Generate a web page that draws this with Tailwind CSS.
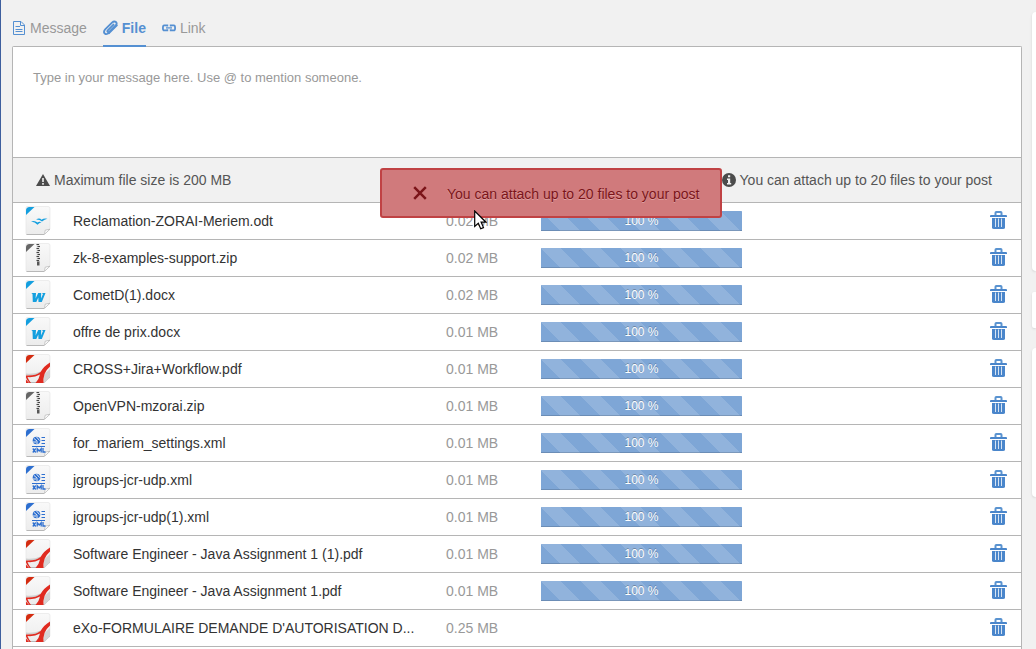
<!DOCTYPE html>
<html lang="en">
<head>
<meta charset="utf-8">
<title>Activity composer</title>
<script src="https://cdn.jsdelivr.net/npm/@tailwindcss/browser@4"></script>
</head>
<body class="h-screen overflow-hidden bg-[#f1f1f1] font-['Liberation_Sans',Arial,sans-serif] text-sm text-[#333]">
<svg class="absolute h-0 w-0" aria-hidden="true">
  <defs>
    <linearGradient id="paper" x1="0" y1="0" x2="0" y2="1"><stop offset="0" stop-color="#f9f9f9"/><stop offset="1" stop-color="#ececec"/></linearGradient>
    <symbol id="page" viewBox="0 0 26 30">
      <path d="M2 .5H23Q25 .5 25 2.500V23L19.500 28.500H2Q1 28.500 1 27V2Q1 .5 2 .5Z" fill="url(#paper)" stroke="#e2e2e2" stroke-width=".6"/>
      <path d="M1.500 28.500H19" stroke="#b8b8b8"/>
      <path d="M19.500 28.300 20.200 24.200 25 23.200Z" fill="#fff" stroke="#b5b5b5" stroke-width=".7"/>
      <path d="M1 9V4.500Q1 1 4.500 1H9.500Z" fill="currentColor"/>
    </symbol>
    <symbol id="odt" viewBox="0 0 26 30">
      <g color="#149fdf"><use href="#page"/></g>
      <path d="M11 13.500Q14.500 11.500 16.500 13.700Q19 11.800 22.500 12.700Q19.500 13.200 17 15.500Q14.500 13.300 11 13.500ZM6 15.500Q10 14.200 12.500 16.600Q14 15.300 16.500 16.200Q14 16.700 12.500 18.700Q10 15.900 6 15.500Z" fill="#149fdf"/>
    </symbol>
    <symbol id="zip" viewBox="0 0 26 30">
      <g color="#666"><use href="#page"/></g>
      <path d="M11.500 .5H15V19H11.500Z" fill="#ddd"/>
      <path d="M11.500 1.500H14M12.500 3.500H15M11.500 5.500H14M12.500 7.500H15M11.500 9.500H14M12.500 11.500H15M11.500 13.500H14M12.500 15.500H15M11.500 17.500H14" stroke="#444" stroke-width="1.200"/>
      <path d="M12 18.500H14.500V22.500H12Z" fill="#555"/>
    </symbol>
    <symbol id="docx" viewBox="0 0 26 30">
      <g color="#149fdf"><use href="#page"/></g>
      <path d="M6.300 13H11L10.600 18.600 13.200 13H16.200L16 18.600 18 14 16.800 13H20.500L16.800 22H13.500L13.300 17.600 11.300 22H7.800L7.500 14Z" fill="#149fdf"/>
    </symbol>
    <symbol id="pdf" viewBox="0 0 26 30">
      <g color="#d42c10"><use href="#page"/></g>
      <path d="M1 19.500Q9 20.500 15.500 17.500L14.500 20Q9 22 1 21.500Z" fill="#cfcfcf"/>
      <path d="M25 15 18.500 21V28.500H20L25 23Z" fill="#d5d5d5"/>
      <path d="M1 21.500Q11 22 15.500 18Q19 12 25 8.500V12.500Q21 16 19.500 20Q18 24.500 18.500 29H10.500Q14 25.500 15 20.500Q9.500 23.700 2.500 23Q3.500 26 6 29H4.500Q2 26.500 1 23.500Z" fill="#e02b20"/>
      <path d="M1 25.500V29H4Z" fill="#e02b20"/>
    </symbol>
    <symbol id="xml" viewBox="0 0 26 30">
      <g color="#2d6fd0"><use href="#page"/></g>
      <circle cx="11.500" cy="12.500" r="3.800" fill="#2d6fd0"/>
      <path d="M9 10.500 12 13V16M11.500 9 14.500 12.500M8 14H11" stroke="#f5f5f5" stroke-width=".9" fill="none"/>
      <path d="M16.500 9.500H20M16.500 12.500H20M16.500 15.500H20M7 18.500H20" stroke="#2d6fd0" stroke-width="1"/>
      <path d="M7.800 20.500 10.700 24.500M10.700 20.500 7.800 24.500M12.200 24.500V20.700L14.200 23 16.200 20.700V24.500M18 20V24H20.500" stroke="#2d6fd0" stroke-width="1.300" fill="none"/>
    </symbol>
    <symbol id="trash" viewBox="0 0 18 20">
      <path d="M5.500 4V1.800Q5.500 1 6.300 1H10.700Q11.500 1 11.500 1.800V4" fill="none" stroke="#5a93d0" stroke-width="2"/>
      <path d="M1 4H16Q17 4 17 5V6H0V5Q0 4 1 4Z" fill="#4a86cb"/>
      <path d="M2 7H15V16.500Q15 18 13 18H4Q2 18 2 16.500Z" fill="#4a86cb"/>
      <path d="M5.500 7.500V16M8.500 7.500V16M11.500 7.500V16" stroke="#d5e3f3" stroke-width="1"/>
    </symbol>
  </defs>
</svg>

<div class="flex h-full border-l border-[#3e5f9e]">
  <main class="ml-[11px] flex flex-1 flex-col pt-4">
    <nav class="flex gap-4 text-[#999]" aria-label="Post type">
      <a href="#message" class="flex h-[30px] items-start gap-1 leading-6">
        <svg class="mt-1 h-4 w-[14px]" viewBox="0 0 14 16" fill="none" stroke="#5590d2"><path d="M1.500 1.500H9L12.500 5V14.500H1.500Z"/><path d="M8.500 1.500V5.500H12.500"/><path d="M3.500 6.500H8M3.500 9.500H10.500M3.500 11.500H10.500"/></svg>Message</a>
      <a href="#file" class="z-10 -mb-px flex h-[31px] items-start gap-1 border-b-2 border-[#5590d2] font-bold leading-6 text-[#5590d2]" aria-current="page">
        <svg class="mt-1 h-4 w-[15px]" viewBox="0 0 15 16" fill="none" stroke="#5590d2" stroke-width="1.900" stroke-linecap="round"><path d="M10.500 4.600 4.800 10.300Q4 11.300 4.800 12Q5.600 12.600 6.500 11.700L12.700 5.500Q14.600 3.400 12.800 1.900Q11 .7 9 2.600L2.400 9.200Q0 11.800 1.800 13.500Q3.600 15 6 12.900"/><path d="M6 13.200 13.800 5.400"/></svg>File</a>
      <a href="#link" class="flex h-[30px] items-start gap-1 leading-6">
        <svg class="mt-1 h-4 w-[14px]" viewBox="0 0 14 16" fill="none" stroke="#5590d2" stroke-width="1.800"><path d="M5.300 6.600V5.400H2.200Q.9 5.400.9 7.900T2.200 10.400H5.300V9.200M8.700 6.600V5.400H11.800Q13.100 5.400 13.100 7.900T11.800 10.400H8.700V9.200"/><path d="M4 7.900H10" stroke-width="1.300"/></svg>Link</a>
    </nav>

    <section class="relative flex-1 rounded-t-[2px] border border-b-0 border-[#b5b5b5] bg-white">
      <textarea aria-label="Message" class="block h-[110px] w-full resize-none bg-white px-5 pt-[21px] text-[13px] leading-5 outline-none placeholder:text-[#999]" placeholder="Type in your message here. Use @ to mention someone."></textarea>

      <div class="flex h-[45px] items-center justify-between border-t border-[#b5b5b5] bg-[#f1f1f1] pr-[29px] pl-[23px] text-[#555]">
        <p class="flex items-center gap-1"><svg class="h-[14px] w-[14px]" viewBox="0 0 14 14"><path d="M7 1 14 13H0Z" fill="#4c4c4c"/><path d="M7 5V9M7 10V11.800" stroke="#f1f1f1" stroke-width="1.600"/></svg>Maximum file size is 200 MB</p>
        <p class="flex items-center gap-1"><svg class="h-[14px] w-[14px]" viewBox="0 0 14 14"><circle cx="7" cy="7" r="7" fill="#4c4c4c"/><path d="M6 2.300H8.200V4.200H6ZM5 5.500H8.200V10H9.200V11.500H5V10H6V7H5Z" fill="#f1f1f1"/></svg>You can attach up to 20 files to your post</p>
      </div>

      <table class="w-full table-fixed border-collapse border-b border-[#b5b5b5]" aria-label="Attached files">
        <colgroup><col class="w-[60px]"><col class="w-[373px]"><col class="w-[95px]"><col class="w-[201px]"><col></colgroup>
        <tbody id="files"></tbody>
      </table>

      <div role="alert" class="absolute top-[121px] left-[367px] flex h-[50px] w-[342px] items-center gap-5 rounded-[3px] border-2 border-[#c04244] bg-[#d07a7c] pl-[31px] text-[#7b1419] [text-shadow:0_1px_0_rgba(255,255,255,0.3)]">
        <svg class="h-[14px] w-[14px] shrink-0" viewBox="0 0 14 14" stroke="#7b1419" stroke-width="2.500"><path d="M1.200 1.200 12.800 12.800M12.800 1.200 1.200 12.800"/></svg>
        <span class="pt-px whitespace-nowrap">You can attach up to 20 files to your post</span>
      </div>
      <svg class="absolute top-[163px] left-[461px] h-[20px] w-[13px]" viewBox="0 0 13 20" aria-hidden="true"><path d="M.7 1V16.500L4.300 13.300 6.700 18.800 9.500 17.600 7.100 12.200H12Z" fill="#fff" stroke="#000" stroke-width="1.200"/></svg>
    </section>
  </main>

  <aside class="ml-[10px] flex w-1 flex-col pt-3" aria-hidden="true">
    <div class="h-[259px] rounded-l-[4px] bg-white shadow-sm"></div>
    <div class="mt-[21px] h-9 rounded-l-[2px] bg-white shadow-sm"></div>
    <div class="mt-5 h-[149px] rounded-l-[4px] bg-white shadow-sm"></div>
  </aside>
</div>

<script>
const files = [
  ['odt', 'Reclamation-ZORAI-Meriem.odt', '0.02', 100],
  ['zip', 'zk-8-examples-support.zip', '0.02', 100],
  ['docx', 'CometD(1).docx', '0.02', 100],
  ['docx', 'offre de prix.docx', '0.01', 100],
  ['pdf', 'CROSS+Jira+Workflow.pdf', '0.01', 100],
  ['zip', 'OpenVPN-mzorai.zip', '0.01', 100],
  ['xml', 'for_mariem_settings.xml', '0.01', 100],
  ['xml', 'jgroups-jcr-udp.xml', '0.01', 100],
  ['xml', 'jgroups-jcr-udp(1).xml', '0.01', 100],
  ['pdf', 'Software Engineer - Java Assignment 1 (1).pdf', '0.01', 100],
  ['pdf', 'Software Engineer - Java Assignment 1.pdf', '0.01', 100],
  ['pdf', "eXo-FORMULAIRE DEMANDE D'AUTORISATION D...", '0.25', 0]
];
document.getElementById('files').innerHTML = files.map(([type, name, size, done]) => `
  <tr class="h-[37px] border-t border-[#b5b5b5]">
    <td class="pl-3"><svg class="h-[30px] w-[26px]"><use href="#${type}"/></svg></td>
    <td class="truncate">${name}</td>
    <td class="text-[#999]">${size} MB</td>
    <td>${done ? `<div role="progressbar" aria-label="${name}" aria-valuenow="${done}" class="h-5 bg-[#7ea6d6]"><div class="h-5 bg-[linear-gradient(45deg,rgba(255,255,255,0.15)_25%,transparent_25%,transparent_50%,rgba(255,255,255,0.15)_50%,rgba(255,255,255,0.15)_75%,transparent_75%)] bg-[size:40px_40px] text-center text-xs leading-5 text-white shadow-[inset_0_-1px_0_rgba(0,0,0,0.15)] [text-shadow:0_-1px_0_rgba(0,0,0,0.25)]" style="width:${done}%">${done} %</div></div>` : ''}</td>
    <td class="pr-[13px] text-right"><button type="button" class="inline-block pb-px align-middle" aria-label="Remove ${name}"><svg class="h-5 w-[18px]"><use href="#trash"/></svg></button></td>
  </tr>`).join('');
</script>
</body>
</html>
